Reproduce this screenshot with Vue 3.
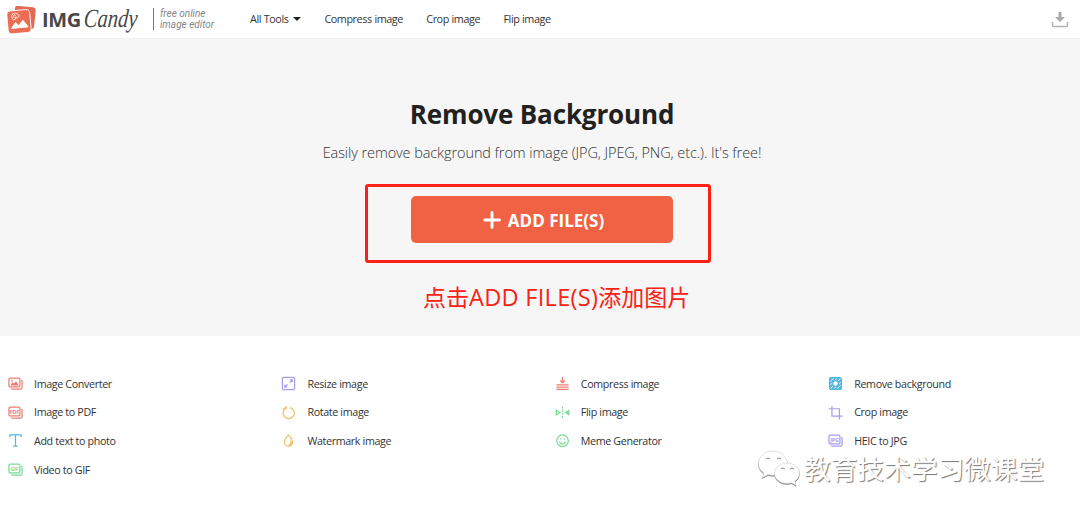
<template>
  <div class="page">
    <header class="header">
      <a class="logo">
        <svg class="logo-mark" viewBox="0 0 29 29">
          <rect x="7" y="1.500" width="21" height="22" rx="3.500" fill="#df6b56" transform="rotate(6 17 12)" />
          <rect x=".5" y="5.200" width="23" height="23" rx="4" fill="#ed6c54" stroke="#fff" stroke-width=".9" transform="rotate(-5 12 17)" />
          <path d="m4.500 23.500 4-6 3.200 3 4.200-5.200 5.200 6.500z" fill="#fff" stroke="#fff" stroke-linejoin="round" />
          <path d="M7.500 12.500q-2-.3-1.300-1.800t2.100-.4.300 2.500 2-.2.100-3.600-5-.2-.5 4.700 3.600.3" fill="none" stroke="#fff" stroke-width=".8" />
        </svg>
        <span class="logo-img">IMG</span>
        <span class="logo-candy">Candy</span>
      </a>
      <div class="tagline">free online<br />image editor</div>
      <nav class="nav">
        <a>All Tools <i class="caret"></i></a>
        <a v-for="item in navItems" :key="item">{{ item }}</a>
      </nav>
      <svg class="download" viewBox="0 0 18 17">
        <path d="M7.500 1h3v5h3.500L9 11 4 6h3.500z" fill="#aaa" />
        <path d="M1.500 11v3.500q0 1 1 1h13q1 0 1-1V11" fill="none" stroke="#b3b3b3" stroke-width="1.500" />
      </svg>
    </header>

    <main class="hero">
      <h1>Remove Background</h1>
      <p>Easily remove background from image (JPG, JPEG, PNG, etc.). It's free!</p>
      <button class="add-file">
        <svg class="plus" viewBox="0 0 18 18">
          <path d="M9 1.500v15M1.500 9h15" stroke="#fff" stroke-width="2.900" stroke-linecap="round" />
        </svg>
        <span>ADD FILE(S)</span>
      </button>
      <div class="highlight"></div>
      <div class="note">点击<span>ADD FILE(S)</span>添加图片</div>
    </main>

    <section class="tools">
      <ul v-for="(column, index) in toolColumns" :key="index">
        <li v-for="tool in column" :key="tool.name">
          <svg class="tool-icon" :class="tool.color" viewBox="0 0 16 16">
            <!-- Stacked frames shared by the converter icons -->
            <template v-if="tool.icon === 'photo' || tool.label">
              <rect x="1" y="2.300" width="11.700" height="9.400" rx="1.400" />
              <path d="M14 4.300q1 .300 1 1.400v6.800q0 1.500-1.500 1.500H4.700q-1.100 0-1.400-.8" />
              <text v-if="tool.label" x="6.900" y="9.100" text-anchor="middle">{{ tool.label }}</text>
              <template v-else>
                <path class="solid" d="m2.500 10 2.200-3.400 1.500 1.500 2.500-2.400 2.700 4.300z" />
                <circle class="solid" cx="4.200" cy="5" r=".9" />
              </template>
            </template>
            <path v-else-if="tool.icon === 'text'" d="M2 4.500v-2.500h12v2.500M8 2v12M5.500 14h5" />
            <template v-else-if="tool.icon === 'resize'">
              <rect x="1.500" y="1.500" width="13" height="13" rx="1.400" />
              <path d="m9 7 3-3M9.300 4h2.700v2.700M7 9l-3 3M4 9.300v2.700h2.700" />
            </template>
            <path v-else-if="tool.icon === 'rotate'" d="M4.200 4.100A6 6 0 1 0 9.500 2.700M1.800 4.200h3.200V1M5 4.200l1.200-2.100" />
            <template v-else-if="tool.icon === 'drop'">
              <path d="M8 2q4.300 5 4.300 7.900a4.300 4.300 0 0 1-8.600 0Q3.700 7 8 2z" />
              <path class="solid" d="M9.800 7.500q1.200 4.500-3 5.700 5 1 4.800-3.700z" />
            </template>
            <path v-else-if="tool.icon === 'compress'" d="M8 1v6M5.500 4.800 8 7.300l2.500-2.500M1.500 9.400h13M1.500 11.800h13M1.500 14.200h13" />
            <template v-else-if="tool.icon === 'flip'">
              <path d="M1.300 5.500v5L5.300 8z" />
              <path d="M8 1.500v13.500" stroke-dasharray="2.200 1.200" />
              <path class="solid" d="M15.300 4.500v7L10.300 8z" />
            </template>
            <template v-else-if="tool.icon === 'smile'">
              <circle cx="8" cy="8.200" r="6.200" />
              <path d="M4.900 9.300q.6 2.500 3.100 2.500t3.100-2.500M5.200 6.300h1.300M9.500 6.300h1.300" />
            </template>
            <template v-else-if="tool.icon === 'background'">
              <rect class="solid" x="1" y="1" width="14" height="14" rx="1.800" />
              <path class="hatch" d="m2.500 6 3.500-3.500M2.500 9.500l7-7M2.500 13.500l11-11M6.500 13.500l7-7M10 13.500l3.500-3.500" />
              <circle class="hole" cx="8" cy="8" r="3" />
            </template>
            <path v-else d="M4.200 1v10.800H15.500M.8 4h11.400v11.500" />
          </svg>
          <span>{{ tool.name }}</span>
        </li>
      </ul>
    </section>

    <div class="watermark">
      <svg viewBox="0 0 44 38">
        <path d="M16 2C8 2 1.500 7.500 1.500 14.500q0 6 5.500 9.500L5.500 28.500l5.500-3q3 1 6 .7L30.500 13.500C28.500 6.500 23 2 16 2z" />
        <path d="M30 14c-7 0-12.500 4.500-12.500 10.200S23 34.500 30 34.500q2.500 0 4.500-.7l4.500 2.400-1.200-4q4.700-3.300 4.700-8C42.500 18.500 37 14 30 14z" />
        <path class="eyes" d="M9 10q2-2 4 0M20 10q2-2 4 0M24 20q2-2 4 0M33 20q2-2 4 0" />
      </svg>
      <span>教育技术学习微课堂</span>
    </div>
  </div>
</template>

<script setup>
const navItems = ['Compress image', 'Crop image', 'Flip image'];

const toolColumns = [
  [
    { name: 'Image Converter', icon: 'photo', color: 'red' },
    { name: 'Image to PDF', label: 'PDF', color: 'red' },
    { name: 'Add text to photo', icon: 'text', color: 'blue' },
    { name: 'Video to GIF', label: 'GIF', color: 'green' }
  ],
  [
    { name: 'Resize image', icon: 'resize', color: 'purple' },
    { name: 'Rotate image', icon: 'rotate', color: 'orange' },
    { name: 'Watermark image', icon: 'drop', color: 'orange' }
  ],
  [
    { name: 'Compress image', icon: 'compress', color: 'red' },
    { name: 'Flip image', icon: 'flip', color: 'green' },
    { name: 'Meme Generator', icon: 'smile', color: 'green' }
  ],
  [
    { name: 'Remove background', icon: 'background', color: 'blue' },
    { name: 'Crop image', icon: 'crop', color: 'purple' },
    { name: 'HEIC to JPG', label: 'JPG', color: 'purple' }
  ]
];
</script>

<style>
body {
  margin: 0;
  background: #fff;
}
</style>

<style scoped>
.page {
  position: relative;
  width: 1080px;
  height: 517px;
  overflow: hidden;
  background: #fff;
  color: #333;
  font-family: "Open Sans", "Noto Sans CJK SC", sans-serif;
}

.header {
  display: flex;
  align-items: center;
  box-sizing: border-box;
  height: 38px;
  padding: 0 11px 0 7px;
}

.logo {
  display: flex;
  align-items: center;
  width: 146px;
  height: 38px;
  color: #484848;
}

.logo-mark {
  flex: none;
  width: 29px;
  height: 29px;
}

.logo-img {
  width: 38px;
  margin-left: 6px;
  font-size: 20px;
  font-weight: 700;
  letter-spacing: -0.4px;
}

.logo-candy {
  margin-left: 4px;
  font: italic 26px "Liberation Serif", serif;
  transform: scaleX(0.79) skewX(-6deg);
  transform-origin: left;
}

.tagline {
  width: 83px;
  padding-left: 6px;
  border-left: 1px solid #777;
  color: #858585;
  font: italic 10px/11px Roboto, sans-serif;
  white-space: nowrap;
}

.nav {
  display: flex;
  gap: 23.3px;
  margin-left: 7px;
  font-size: 10.8px;
  letter-spacing: -0.42px;
  line-height: 16px;
  word-spacing: 0.3px;
}

.nav a {
  white-space: nowrap;
}

.caret {
  display: inline-block;
  margin: 0 0 2px 2px;
  border: 4px solid transparent;
  border-top: 4px solid #222;
  border-bottom: 0;
}

.download {
  width: 18px;
  height: 17px;
  margin-left: auto;
}

.hero {
  display: flex;
  flex-direction: column;
  align-items: center;
  box-sizing: border-box;
  height: 298px;
  padding: 57px 0 0 4px;
  border-top: 1px solid #f1f1f1;
  background: #f6f6f6;
}

.hero h1 {
  margin: 0;
  color: #212121;
  font-size: 26px;
  letter-spacing: -0.15px;
  line-height: 36px;
}

.hero p {
  margin: 11px 0 0;
  color: #333;
  font-size: 14.5px;
  font-weight: 300;
  letter-spacing: -0.09px;
  line-height: 20px;
  white-space: nowrap;
}

.add-file {
  display: flex;
  align-items: center;
  justify-content: center;
  gap: 7px;
  width: 262px;
  height: 47px;
  margin: 33.4px 1px 0 0;
  padding: 0 0 0 4px;
  border: 0;
  border-radius: 5px;
  background: #f16244;
  color: #fff;
  font: 700 17px "Open Sans", sans-serif;
}

.add-file span {
  padding-top: 1px;
}

.plus {
  width: 18px;
  height: 18px;
}

.highlight {
  position: absolute;
  top: 184px;
  left: 365px;
  box-sizing: border-box;
  width: 346px;
  height: 79px;
  border: 3px solid #fc2015;
  border-radius: 3px;
}

.note {
  position: absolute;
  top: 280px;
  left: 423px;
  color: #fc2015;
  font-size: 23px;
  line-height: 34px;
  white-space: nowrap;
}

.note span {
  font-size: 23.5px;
  letter-spacing: 0.3px;
}

.tools {
  display: grid;
  grid-template-columns: repeat(4, 273.4px);
  padding: 33.5px 0 0 8px;
}

.tools ul {
  margin: 0;
  padding: 0;
  list-style: none;
}

.tools li {
  display: flex;
  align-items: center;
  gap: 11px;
  height: 28.6px;
  font-size: 10.7px;
  letter-spacing: -0.34px;
  white-space: nowrap;
}

.tool-icon {
  width: 15px;
  height: 15px;
  overflow: visible;
  fill: none;
  stroke: currentColor;
  stroke-width: 1.3;
}

.tool-icon text {
  fill: currentColor;
  stroke: none;
  font: 700 5.6px "Open Sans", sans-serif;
  letter-spacing: -0.1px;
}

.tool-icon .solid {
  fill: currentColor;
  stroke: none;
}

.tool-icon .hatch {
  stroke: #fff;
  stroke-width: 0.9;
}

.tool-icon .hole {
  fill: #fff;
}

.red {
  color: #ed7d75;
}

.blue {
  color: #55b8e3;
}

.green {
  color: #79d995;
}

.purple {
  color: #aa9af0;
}

.orange {
  color: #f4bd65;
}

.watermark {
  position: absolute;
  top: 448px;
  left: 757px;
  display: flex;
  align-items: center;
  color: #fff;
  font-family: "Noto Sans CJK SC", sans-serif;
  font-size: 26.7px;
  line-height: 40px;
  text-shadow: 1px 1px 1px #777;
  white-space: nowrap;
}

.watermark svg {
  width: 44px;
  height: 38px;
  margin-right: 3px;
  fill: #fff;
  stroke: #ccc;
  stroke-width: 0.6;
  filter: drop-shadow(0.5px 1px 0.3px #888);
}

.watermark .eyes {
  fill: none;
  stroke: #888;
  stroke-width: 1;
}
</style>
